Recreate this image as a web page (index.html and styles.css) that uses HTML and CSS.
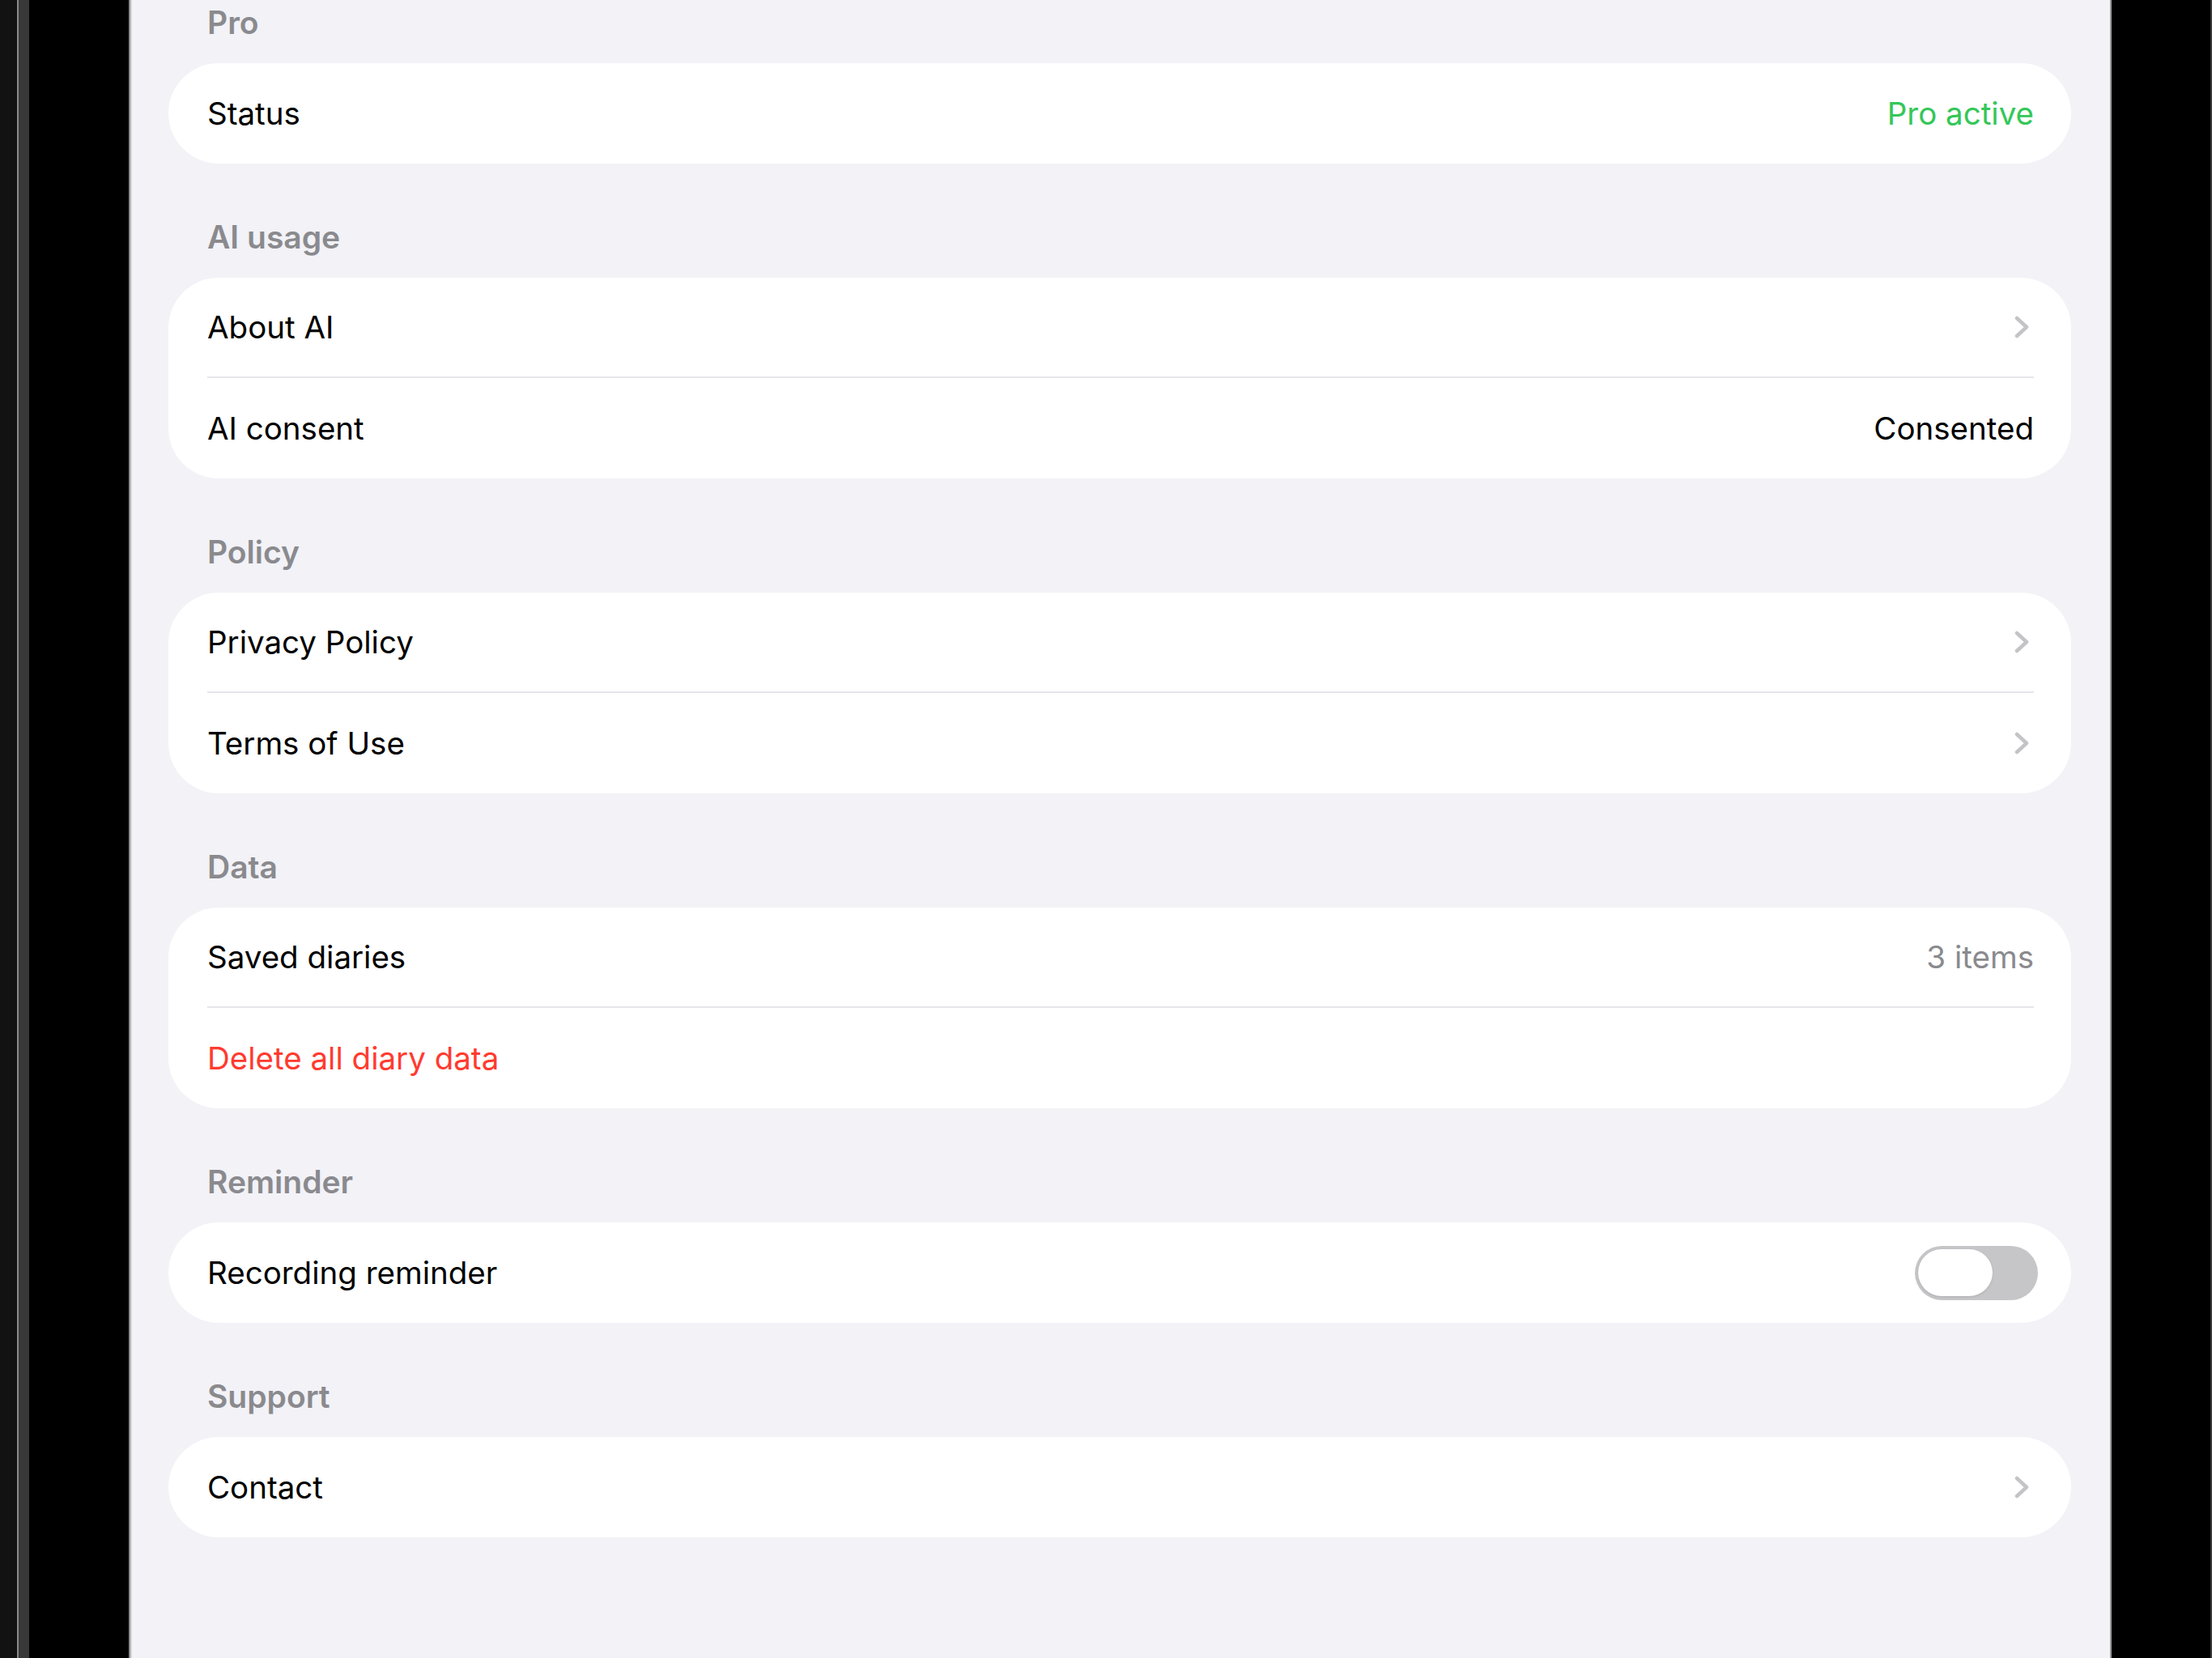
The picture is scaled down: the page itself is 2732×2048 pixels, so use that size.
FILE: index.html
```html
<!DOCTYPE html>
<html lang="en">
<head>
  <meta charset="UTF-8" />
  <meta name="viewport" content="width=device-width, initial-scale=1.0" />
  <title>Settings</title>
  <link rel="stylesheet" href="styles.css">
</head>
<body>
  <div class="device">
    <div class="bezel bezel-left"></div>

    <main class="screen">
      <section class="group">
        <h2 class="group-title">Pro</h2>
        <div class="card">
          <div class="row">
            <span class="label">Status</span>
            <span class="value value-green">Pro active</span>
          </div>
        </div>
      </section>

      <section class="group">
        <h2 class="group-title">AI usage</h2>
        <div class="card">
          <div class="row">
            <span class="label">About AI</span>
            <svg class="chevron" width="18" height="28" viewBox="0 0 18 28"><polyline points="3,3 15,14 3,25" /></svg>
          </div>
          <div class="row">
            <span class="label">AI consent</span>
            <span class="value">Consented</span>
          </div>
        </div>
      </section>

      <section class="group">
        <h2 class="group-title">Policy</h2>
        <div class="card">
          <div class="row">
            <span class="label">Privacy Policy</span>
            <svg class="chevron" width="18" height="28" viewBox="0 0 18 28"><polyline points="3,3 15,14 3,25" /></svg>
          </div>
          <div class="row">
            <span class="label">Terms of Use</span>
            <svg class="chevron" width="18" height="28" viewBox="0 0 18 28"><polyline points="3,3 15,14 3,25" /></svg>
          </div>
        </div>
      </section>

      <section class="group">
        <h2 class="group-title">Data</h2>
        <div class="card">
          <div class="row">
            <span class="label">Saved diaries</span>
            <span class="value value-muted">3 items</span>
          </div>
          <div class="row">
            <span class="label label-danger">Delete all diary data</span>
          </div>
        </div>
      </section>

      <section class="group">
        <h2 class="group-title">Reminder</h2>
        <div class="card">
          <div class="row">
            <span class="label">Recording reminder</span>
            <div class="switch"><div class="knob"></div></div>
          </div>
        </div>
      </section>

      <section class="group">
        <h2 class="group-title">Support</h2>
        <div class="card">
          <div class="row">
            <span class="label">Contact</span>
            <svg class="chevron" width="18" height="28" viewBox="0 0 18 28"><polyline points="3,3 15,14 3,25" /></svg>
          </div>
        </div>
      </section>
    </main>

    <div class="bezel bezel-right"></div>
  </div>
</body>
</html>
```

FILE: styles.css
```css
* {
  box-sizing: border-box;
}
body {
  margin: 0;
  background: #000;
  font-family: Inter, "Noto Sans", sans-serif;
}
.device {
  display: flex;
  height: 2048px;
  overflow: hidden;
}
.bezel {
  flex: none;
}
.bezel-left {
  width: 163px;
  background: linear-gradient(to right,
    #121212 0 21px,
    #8a8a8a 21px 23px,
    #383838 23px 36px,
    #000 36px 159px,
    #8c8c8c 159px 161px,
    #d9d9dc 161px 163px);
}
.bezel-right {
  width: 126px;
  background: linear-gradient(to right,
    #9a9a9a 0 2px,
    #000 2px 124px,
    #3a3a3a 124px 126px);
}
.screen {
  flex: 1;
  background: #f2f2f7;
  padding: 3px 48px 0 45px;
}
.group + .group {
  margin-top: 66px;
}
.group-title {
  margin: 0 0 25px;
  padding-left: 48px;
  font-size: 39px;
  font-weight: 600;
  line-height: 50px;
  color: #8a8a8e;
}
.card {
  background: #fff;
  border-radius: 62px;
  padding: 0 46px 0 48px;
}
.row {
  display: flex;
  align-items: center;
  justify-content: space-between;
  height: 124px;
  font-size: 38.5px;
  color: #000;
}
.row:not(:last-child) {
  border-bottom: 2px solid #e5e5ea;
}
.value-green {
  color: #34c759;
}
.value-muted {
  color: #8a8a8e;
}
.label-danger {
  color: #ff3b30;
}
.chevron {
  margin-right: 6px;
  fill: none;
  stroke: #c4c4c7;
  stroke-width: 4.5;
  stroke-linecap: round;
  stroke-linejoin: round;
}
.switch {
  width: 152px;
  height: 67px;
  margin-right: -5px;
  padding: 0 4px;
  border-radius: 34px;
  background: #c6c6c9;
  display: flex;
  align-items: center;
}
.knob {
  width: 92px;
  height: 58px;
  border-radius: 29px;
  background: #fff;
  box-shadow: 0 1px 3px rgba(0, 0, 0, 0.12);
}
```
